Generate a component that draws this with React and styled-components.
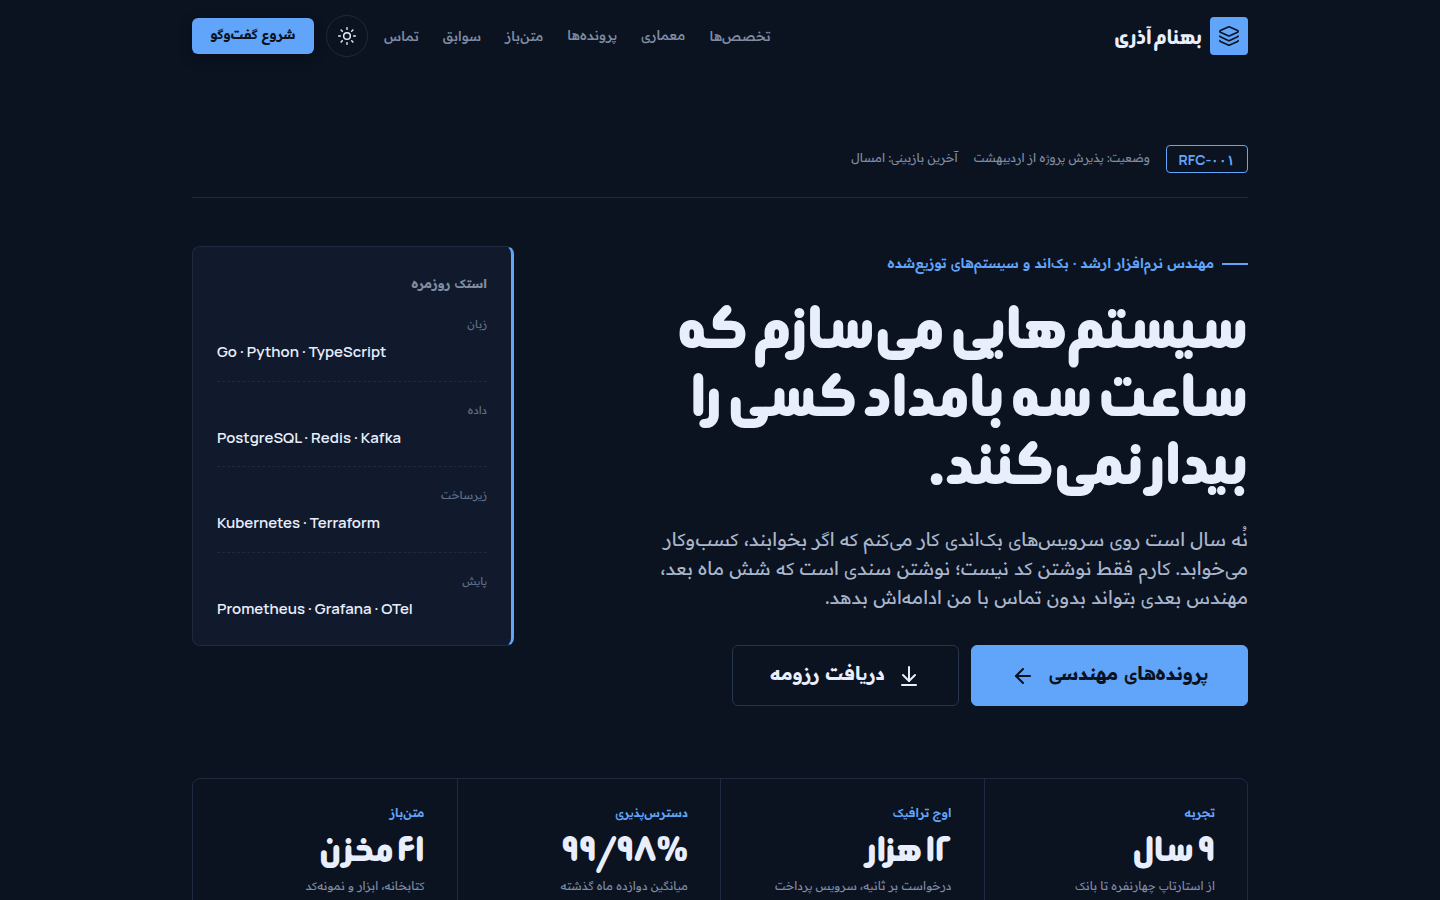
import React from 'react'
import styled, { createGlobalStyle } from 'styled-components'
import { ArrowDownToLine, ArrowLeft, Layers, Sun } from 'lucide-react'

const Global = createGlobalStyle`
  * { box-sizing: border-box; }
  body {
    margin: 0;
    background: #0b1220;
    color: #e8eefc;
    font-family: "Readex Pro", "Vazirmatn", sans-serif;
  }
`

const Page = styled.div`
  width: 1056px;
  margin: 0 auto;
  direction: rtl;
`

const Header = styled.header`
  height: 72px;
  display: flex;
  align-items: center;
  justify-content: space-between;
`

const Brand = styled.div`
  display: flex;
  align-items: center;
  gap: 8px;
  font-family: "Beiruti", "Lalezar", sans-serif;
  font-size: 24px;
  font-weight: 800;
  color: #e8eefc;
`

const LogoBox = styled.div`
  width: 38px;
  height: 38px;
  border-radius: 4px;
  background: #60a5fa;
  color: #0b1220;
  display: flex;
  align-items: center;
  justify-content: center;
`

const Nav = styled.nav`
  display: flex;
  align-items: center;
  gap: 24px;
`

const NavLink = styled.a`
  font-size: 13.3px;
  font-weight: 500;
  color: #7f8ca3;
`

const Actions = styled.div`
  display: flex;
  align-items: center;
  gap: 12px;
  margin-right: -8px;
`

const ThemeButton = styled.div`
  width: 42px;
  height: 42px;
  border-radius: 50%;
  border: 1px solid #1e2a40;
  color: #e8eefc;
  display: flex;
  align-items: center;
  justify-content: center;
`

const TalkButton = styled.div`
  width: 122px;
  height: 36px;
  border-radius: 6px;
  background: #60a5fa;
  color: #0b1220;
  font-size: 13px;
  font-weight: 700;
  display: flex;
  align-items: center;
  justify-content: center;
  box-shadow: 0 4px 14px rgba(0, 0, 0, 0.25);
`

const MetaBar = styled.div`
  margin-top: 73px;
  padding-bottom: 24px;
  border-bottom: 1px solid #1e2a40;
  display: flex;
  align-items: center;
  gap: 16px;
  font-size: 11.8px;
  color: #7f8ca3;
`

const Tag = styled.span`
  height: 28px;
  width: 82px;
  border: 1px solid #60a5fa;
  border-radius: 4px;
  color: #60a5fa;
  font-size: 14px;
  font-weight: 700;
  display: flex;
  align-items: center;
  justify-content: center;
  font-family: "Manrope", "Readex Pro", sans-serif;
`

const Hero = styled.section`
  margin-top: 48px;
  display: grid;
  grid-template-columns: 1fr 322px;
  align-items: start;
`

const HeroText = styled.div`
  display: flex;
  flex-direction: column;
  align-items: flex-start;
`

const Eyebrow = styled.div`
  display: flex;
  align-items: center;
  gap: 8px;
  color: #60a5fa;
  font-size: 13.6px;
  font-weight: 600;
  height: 36px;
  &::before {
    content: '';
    width: 26px;
    height: 2px;
    background: #60a5fa;
  }
`

const Title = styled.h1`
  margin: 12px 0 0;
  font-family: "Beiruti", "Lalezar", sans-serif;
  font-size: 68px;
  line-height: 68px;
  font-weight: 900;
  color: #e8eefc;
  width: 590px;
`

const Lead = styled.p`
  margin: 27px 0 0;
  width: 590px;
  font-size: 18.4px;
  line-height: 29px;
  color: #a9b6cb;
`

const Buttons = styled.div`
  margin-top: 33px;
  display: flex;
  gap: 12px;
`

const CtaButton = styled.div`
  height: 61px;
  width: ${p => p.$w}px;
  border-radius: 6px;
  border: 1px solid ${p => (p.$primary ? '#60a5fa' : '#26344d')};
  background: ${p => (p.$primary ? '#60a5fa' : 'transparent')};
  color: ${p => (p.$primary ? '#0b1220' : '#e8eefc')};
  font-size: 18.4px;
  font-weight: 700;
  display: flex;
  align-items: center;
  justify-content: center;
  gap: ${p => (p.$primary ? 14 : 12)}px;
`

const StackCard = styled.aside`
  height: 400px;
  background: #111a2c;
  border: 1px solid #1e2a40;
  border-right: 3px solid #60a5fa;
  border-radius: 8px;
  padding: 24px;
`

const StackTitle = styled.div`
  margin-bottom: 1px;
  font-size: 12.5px;
  font-weight: 700;
  color: #7f8ca3;
  line-height: 24px;
`

const StackItem = styled.div`
  padding: 18px 0 ${p => (p.$last ? 0 : 16.5)}px;
  border-bottom: ${p => (p.$last ? 'none' : '1px dashed #1e2a40')};
`

const StackLabel = styled.div`
  font-size: 11px;
  line-height: 20px;
  color: #5f6f8a;
`

const StackValue = styled.div`
  margin-top: 6px;
  direction: ltr;
  text-align: left;
  font-family: "Manrope", sans-serif;
  font-size: 15px;
  line-height: 24px;
  font-weight: 600;
  color: #e8eefc;
`

const Stats = styled.section`
  margin-top: 72px;
  margin-bottom: 48px;
  display: grid;
  grid-template-columns: repeat(4, 1fr);
  border: 1px solid #1e2a40;
  border-radius: 8px;
`

const Stat = styled.div`
  padding: 24px 32px;
  border-left: ${p => (p.$last ? 'none' : '1px solid #1e2a40')};
`

const StatLabel = styled.div`
  font-size: 12px;
  line-height: 20px;
  font-weight: 600;
  color: #60a5fa;
`

const StatValue = styled.div`
  margin-top: 2px;
  font-family: "Beiruti", "Lalezar", sans-serif;
  font-size: 40px;
  line-height: 48px;
  font-weight: 900;
  color: #e8eefc;
`

const StatDesc = styled.div`
  margin-top: 3px;
  font-size: 11.5px;
  line-height: 20px;
  color: #7f8ca3;
`

const navItems = ['تخصص‌ها', 'معماری', 'پرونده‌ها', 'متن‌باز', 'سوابق', 'تماس']

const stack = [
  { label: 'زبان', value: 'Go · Python · TypeScript' },
  { label: 'داده', value: 'PostgreSQL · Redis · Kafka' },
  { label: 'زیرساخت', value: 'Kubernetes · Terraform' },
  { label: 'پایش', value: 'Prometheus · Grafana · OTel' },
]

const stats = [
  { label: 'تجربه', value: '۹ سال', desc: 'از استارتاپ چهارنفره تا بانک' },
  { label: 'اوج ترافیک', value: '۱۲ هزار', desc: 'درخواست بر ثانیه، سرویس پرداخت' },
  { label: 'دسترس‌پذیری', value: '۹۹/۹۸%', desc: 'میانگین دوازده ماه گذشته' },
  { label: 'متن‌باز', value: '۴۱ مخزن', desc: 'کتابخانه، ابزار و نمونه‌کد' },
]

export default function App() {
  return (
    <Page>
      <Global />
      <Header>
        <Brand>
          <LogoBox><Layers size={22} strokeWidth={1.75} /></LogoBox>
          بهنام آذری
        </Brand>
        <Nav>
          {navItems.map(item => <NavLink key={item}>{item}</NavLink>)}
          <Actions>
            <ThemeButton><Sun size={20} strokeWidth={1.75} /></ThemeButton>
            <TalkButton>شروع گفت‌وگو</TalkButton>
          </Actions>
        </Nav>
      </Header>

      <MetaBar>
        <Tag>RFC-۰۰۱</Tag>
        <span>وضعیت: پذیرش پروژه از اردیبهشت</span>
        <span>آخرین بازبینی: امسال</span>
      </MetaBar>

      <Hero>
        <HeroText>
          <Eyebrow>مهندس نرم‌افزار ارشد · بک‌اند و سیستم‌های توزیع‌شده</Eyebrow>
          <Title>سیستم‌هایی می‌سازم که ساعت سه بامداد کسی را بیدار نمی‌کنند.</Title>
          <Lead>
            نُه سال است روی سرویس‌های بک‌اندی کار می‌کنم که اگر بخوابند، کسب‌وکار می‌خوابد.
            کارم فقط نوشتن کد نیست؛ نوشتن سندی است که شش ماه بعد، مهندس بعدی بتواند بدون تماس با من ادامه‌اش بدهد.
          </Lead>
          <Buttons>
            <CtaButton $primary $w={277}>پرونده‌های مهندسی <ArrowLeft size={24} strokeWidth={2} /></CtaButton>
            <CtaButton $w={227}><ArrowDownToLine size={24} strokeWidth={2} /> دریافت رزومه</CtaButton>
          </Buttons>
        </HeroText>
        <StackCard>
          <StackTitle>استک روزمره</StackTitle>
          {stack.map((s, i) => (
            <StackItem key={s.label} $last={i === stack.length - 1}>
              <StackLabel>{s.label}</StackLabel>
              <StackValue>{s.value}</StackValue>
            </StackItem>
          ))}
        </StackCard>
      </Hero>

      <Stats>
        {stats.map((s, i) => (
          <Stat key={s.label} $last={i === stats.length - 1}>
            <StatLabel>{s.label}</StatLabel>
            <StatValue>{s.value}</StatValue>
            <StatDesc>{s.desc}</StatDesc>
          </Stat>
        ))}
      </Stats>
    </Page>
  )
}
